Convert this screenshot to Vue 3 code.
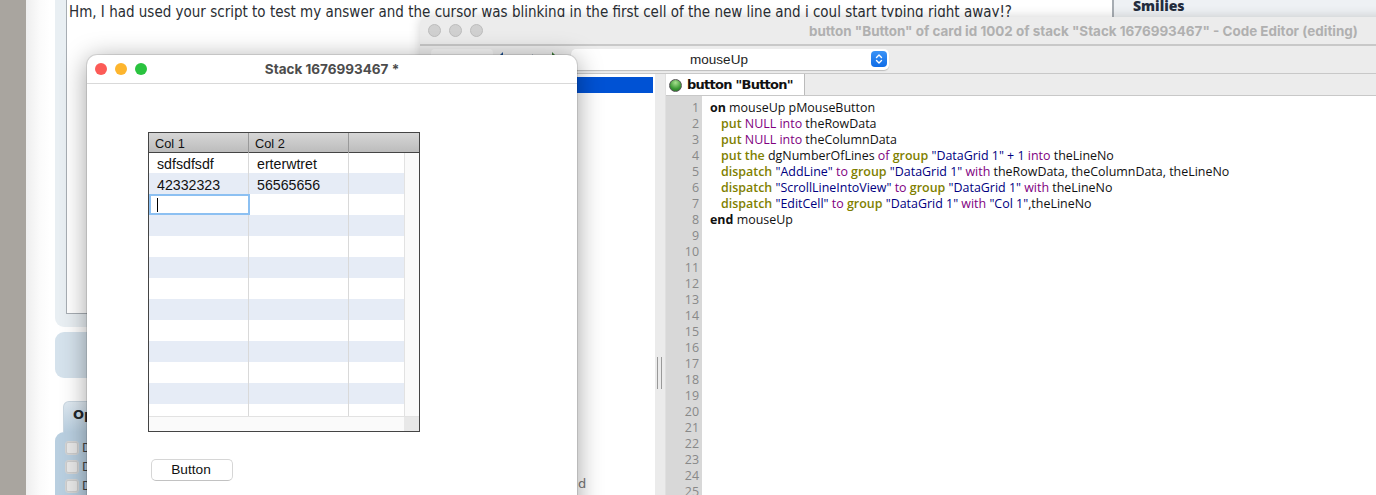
<script setup>
const K = 'k', P = 'p', S = 's', B = 'b', T = 't', I = 'i'
const code = [
  [[B,'on'],[T,' mouseUp pMouseButton']],
  [[I,''],[K,'put'],[P,' NULL into'],[T,' theRowData']],
  [[I,''],[K,'put'],[P,' NULL into'],[T,' theColumnData']],
  [[I,''],[K,'put the'],[T,' dgNumberOfLines '],[P,'of'],[K,' group'],[S,' "DataGrid 1" + 1'],[P,' into'],[T,' theLineNo']],
  [[I,''],[K,'dispatch'],[S,' "AddLine"'],[P,' to'],[K,' group'],[S,' "DataGrid 1"'],[P,' with'],[T,' theRowData, theColumnData, theLineNo']],
  [[I,''],[K,'dispatch'],[S,' "ScrollLineIntoView"'],[P,' to'],[K,' group'],[S,' "DataGrid 1"'],[P,' with'],[T,' theLineNo']],
  [[I,''],[K,'dispatch'],[S,' "EditCell"'],[P,' to'],[K,' group'],[S,' "DataGrid 1"'],[P,' with'],[S,' "Col 1"'],[T,',theLineNo']],
  [[B,'end'],[T,' mouseUp']],
]
const numbers = Array.from({ length: 25 }, (_, i) => i + 1)
const rows = [
  ['sdfsdfsdf', 'erterwtret'],
  ['42332323', '56565656'],
  ['', ''],
  ...Array.from({ length: 10 }, () => ['', '']),
]
</script>

<template>
  <div class="desk">
    <div class="gutter"></div>
    <div class="page">
      <div class="main">
        <div class="post">
          <div class="box">Hm, I had used your script to test my answer and the cursor was blinking in the first cell of the new line and i coul start typing right away!?</div>
        </div>
        <div class="strip"></div>
        <div class="tab"><b>Op</b></div>
        <div class="opts">
          <div class="opt"><i></i>D</div>
          <div class="opt"><i></i>D</div>
          <div class="opt"><i></i>D</div>
        </div>
      </div>
      <div class="side"><b>Smilies</b></div>
    </div>

    <section class="editor">
      <header class="ed-title">
        <div class="dots"><i></i><i></i><i></i></div>
        <span class="ed-name">button "Button" of card id 1002 of stack "Stack 1676993467" - Code Editor (editing)</span>
      </header>
      <div class="toolbar">
        <div class="backbtn"></div>
        <svg class="arrows" width="64" height="10" viewBox="0 0 64 10">
          <path d="M11 1 5 7h6z" fill="#1d4f8f"/>
          <path d="M40 3v4h4z" fill="#7f93a8"/>
          <path d="M60 1v6h6z" fill="#3f7a3a"/>
        </svg>
        <div class="combo">
          <span>mouseUp</span>
          <div class="stepper">
            <svg width="16" height="16" viewBox="0 0 16 16" fill="none" stroke="#fff" stroke-width="1.4" stroke-linecap="round" stroke-linejoin="round">
              <path d="M5.5 6.5 8 4l2.5 2.5M5.5 9.5 8 12l2.5-2.5"/>
            </svg>
          </div>
        </div>
      </div>
      <div class="ed-body">
        <aside class="list">
          <div class="sel"></div>
          <div class="tail">d</div>
        </aside>
        <div class="split"><span class="grip"></span></div>
        <div class="pane">
          <div class="tabbar">
            <div class="doc"><span class="ball"></span>button "Button"</div>
          </div>
          <div class="source">
            <div class="nums"><div v-for="n in numbers" :key="n">{{ n }}</div></div>
            <div class="lines">
              <div v-for="(line, i) in code" :key="i" class="line"><span v-for="(t, j) in line" :key="j" :class="t[0]">{{ t[1] }}</span></div>
            </div>
          </div>
        </div>
      </div>
    </section>

    <section class="stack">
      <header class="st-title">
        <div class="lights"><i class="r"></i><i class="y"></i><i class="g"></i></div>
        <span>Stack 1676993467 *</span>
      </header>
      <div class="st-body">
        <div class="grid">
          <div class="ghead">
            <div>Col 1</div><div>Col 2</div><div></div>
          </div>
          <div class="gmid">
            <div class="grows">
              <div v-for="(r, i) in rows" :key="i" class="grow" :class="{ alt: i % 2 === 1 }">
                <div class="cell">{{ r[0] }}</div>
                <div class="cell">{{ r[1] }}</div>
                <div class="cell"></div>
              </div>
              <div class="edit"><span class="caret"></span></div>
            </div>
            <div class="vbar"></div>
          </div>
          <div class="hbar"><div class="corner"></div></div>
        </div>
        <button class="btn">Button</button>
      </div>
    </section>
  </div>
</template>

<style>
html, body { margin: 0; overflow: hidden; background: #fff; }
</style>

<style scoped>
.desk { position: relative; width: 1376px; height: 495px; overflow: hidden; display: flex; font-family: "Liberation Sans", sans-serif; }
.gutter { width: 26px; flex: none; background: #a9a59f; }
.page { flex: 1; display: flex; background: linear-gradient(90deg, #eeeeee 0, #fbfbfb 14px, #fff 24px); }
.main { width: 1058px; flex: none; padding-left: 29px; box-sizing: content-box; }
.post { height: 327px; width: 1058px; box-sizing: border-box; padding: 0 0 13px 11px; background: #e9eff3; border-radius: 0 0 9px 9px; }
.box { height: 100%; box-sizing: border-box; background: #fff; border: 1px solid #a7adb3; border-top: 0; padding: 3px 0 0 2px; font: 15px/18px "DejaVu Sans", sans-serif; font-stretch: condensed; color: #2a2e33; white-space: nowrap; overflow: hidden; }
.strip { height: 46px; margin-top: 5px; width: 1058px; background: #d5e2ec; border-radius: 9px; }
.tab { margin: 23px 0 0 8px; width: 60px; height: 31px; box-sizing: border-box; padding: 1px 0 0 9px; background: linear-gradient(180deg, #dfe9f1, #b9cfe0); border: 1px solid #c9d6e0; border-bottom: 0; border-radius: 6px 6px 0 0; font: bold 13px/24px "DejaVu Sans", sans-serif; color: #22262b; }
.opts { height: 80px; width: 1058px; background: #b9cfe0; border-radius: 9px 0 0 0; padding: 6px 0 0 11px; box-sizing: border-box; font: 12px/19px "DejaVu Sans", sans-serif; color: #444; }
.opt { display: flex; align-items: center; gap: 4px; height: 20px; margin-bottom: -1px; }
.opt i { width: 10px; height: 10px; background: #e8e8e8; border: 1px solid #ccc; outline: 1px solid #d5d5d5; border-radius: 2px; display: block; }
.side { width: 263px; flex: none; box-sizing: border-box; border-left: 1px solid #a7adb3; background: #eef1f4; padding-left: 19px; font: bold 14px/12px "Open Sans", sans-serif; color: #232c3d; }

.editor { position: absolute; left: 420px; top: 17px; width: 1000px; height: 520px; background: #ececec; border-radius: 8px 0 0 0; box-shadow: 0 0 12px rgba(0,0,0,.18); display: flex; flex-direction: column; }
.ed-title { height: 29px; flex: none; box-sizing: border-box; border-bottom: 2px solid #c8c8c8; display: flex; align-items: center; padding-left: 8px; }
.dots { display: flex; gap: 8px; }
.dots i { width: 11px; height: 11px; border-radius: 50%; background: #d0d0d0; border: 1px solid #bdbdbd; display: block; }
.ed-name { margin-left: 326px; font: bold 13.45px "Inter", sans-serif; color: #b0b0b0; white-space: nowrap; }
.toolbar { height: 28px; flex: none; box-sizing: border-box; border-bottom: 1px solid #c8c8c8; display: flex; align-items: flex-start; padding: 3px 0 0 11px; position: relative; }
.backbtn { width: 62px; height: 20px; background: #f5f5f5; border-radius: 4px; }
.arrows { margin: 2px 0 0 -1px; flex: none; width: 64px; overflow: visible; }
.combo { position: relative; margin-left: 15px; width: 318px; height: 21px; background: #fff; border-radius: 5px; box-shadow: 0 1px 1px rgba(0,0,0,.2); font: 13.5px/21px "Liberation Sans", sans-serif; color: #222; text-align: center; box-sizing: border-box; padding-right: 22px; }
.combo span { display: block; }
.stepper { position: absolute; right: 2px; top: 2px; width: 16px; height: 16px; border-radius: 4px; background: linear-gradient(180deg, #3a93f7, #0e6be6); display: flex; }
.ed-body { flex: 1; display: flex; min-height: 0; }
.list { width: 235px; flex: none; background: #fff; position: relative; padding-top: 3px; box-sizing: border-box; }
.sel { height: 16px; background: #0052d4; margin-right: 2px; }
.tail { position: absolute; left: 158px; top: 402px; font: 13px/16px "DejaVu Sans", sans-serif; color: #777; }
.split { width: 11px; flex: none; box-sizing: border-box; background: #ebebeb; border-right: 1px solid #e0e0e0; position: relative; }
.grip { position: absolute; left: 2px; top: 283px; width: 3px; height: 32px; border-left: 1px solid #999; border-right: 1px solid #999; }
.pane { flex: 1; display: flex; flex-direction: column; background: #fff; min-width: 0; }
.tabbar { height: 22px; box-sizing: border-box; flex: none; background: #ececec; border-bottom: 1px solid #c8c8c8; }
.doc { width: 139px; height: 21px; box-sizing: border-box; background: #fff; border-right: 1px solid #bbb; font: bold 13px/22px "DejaVu Sans", sans-serif; letter-spacing: -.75px; color: #111; display: flex; align-items: center; gap: 5px; padding: 1px 0 0 3px; }
.ball { width: 13px; height: 13px; border-radius: 50%; background: radial-gradient(circle at 50% 25%, #a8e08f, #3d9a36 60%, #1f6a22); border: 1px solid #555; box-sizing: border-box; flex: none; }
.source { flex: 1; display: flex; font: 12.45px/16px "Open Sans", sans-serif; min-height: 0; }
.nums { width: 36px; flex: none; box-sizing: border-box; background: #d8d8d8; text-align: right; padding: 4px 3px 0 0; color: #888; }
.lines { padding: 4px 0 0 8px; color: #111; white-space: pre; }
.line { height: 16px; }
.i { display: inline-block; width: 11px; }
.b { font-weight: 700; color: #111; }
.k { color: #7f7f00; font-weight: 600; }
.p { color: #7f007f; }
.s { color: #00007f; }
.t { color: #111; }

.stack { position: absolute; left: 87px; top: 55px; width: 490px; height: 470px; box-sizing: border-box; background: #fff; border-radius: 10px 10px 0 0; box-shadow: 0 0 0 1px rgba(0,0,0,.1), 0 4px 26px rgba(0,0,0,.38); display: flex; flex-direction: column; }
.st-title { height: 29px; flex: none; box-sizing: border-box; border-bottom: 1px solid #d9d9d9; position: relative; display: flex; align-items: center; justify-content: center; font: bold 13.5px "Inter", sans-serif; color: #4c4c4c; }
.lights { position: absolute; left: 8px; top: 8px; display: flex; gap: 8px; }
.lights i { width: 12px; height: 12px; border-radius: 50%; display: block; }
.r { background: #fc5b57; } .y { background: #fdb52e; } .g { background: #2ac33f; }
.st-body { flex: 1; padding: 48px 0 0 61px; }
.grid { width: 272px; height: 300px; box-sizing: border-box; border: 1px solid #444; display: flex; flex-direction: column; }
.ghead { height: 20px; flex: none; box-sizing: border-box; border-bottom: 1px solid #444; display: grid; grid-template-columns: 100px 100px 1fr; background: linear-gradient(180deg, #d6d6d6, #bcbcbc); font: 12.8px/21px "Liberation Sans", sans-serif; color: #111; }
.ghead div { padding-left: 6px; border-right: 1px solid #999; }
.ghead div:last-child { border: 0; }
.gmid { flex: 1; display: flex; min-height: 0; }
.grows { width: 255px; flex: none; height: 263px; overflow: hidden; position: relative; }
.grow { height: 21px; display: grid; grid-template-columns: 100px 100px 1fr; }
.grow:first-child { height: 20px; }
.grow.alt { background: #e6ecf6; }
.cell { font: 14.2px/21px "Liberation Sans", sans-serif; color: #111; padding: 2px 0 0 8px; border-right: 1px solid #d9d9d9; overflow: hidden; box-sizing: border-box; }
.grow:first-child .cell { padding-top: 1px; }
.cell:last-child { border-right: 0; }
.edit { position: absolute; left: 0; top: 41px; width: 101px; height: 21px; box-sizing: border-box; background: #fff; border: 2px solid #8cc0f2; }
.caret { position: absolute; left: 6px; top: 2px; width: 1px; height: 14px; background: #000; }
.vbar { flex: 1; background: #fafafa; border-left: 1px solid #e2e2e2; }
.hbar { height: 15px; flex: none; box-sizing: border-box; background: #fafafa; border-top: 1px solid #e2e2e2; display: flex; justify-content: flex-end; }
.corner { width: 15px; background: #e8e8e8; }
.btn { display: block; margin: 27px 0 0 3px; width: 82px; height: 22px; padding: 0 2px 2px 0; box-sizing: border-box; background: #fff; border: 1px solid #d6d6d6; border-bottom-color: #c2c2c2; border-radius: 5px; font: 13.7px "Liberation Sans", sans-serif; color: #111; }
</style>
